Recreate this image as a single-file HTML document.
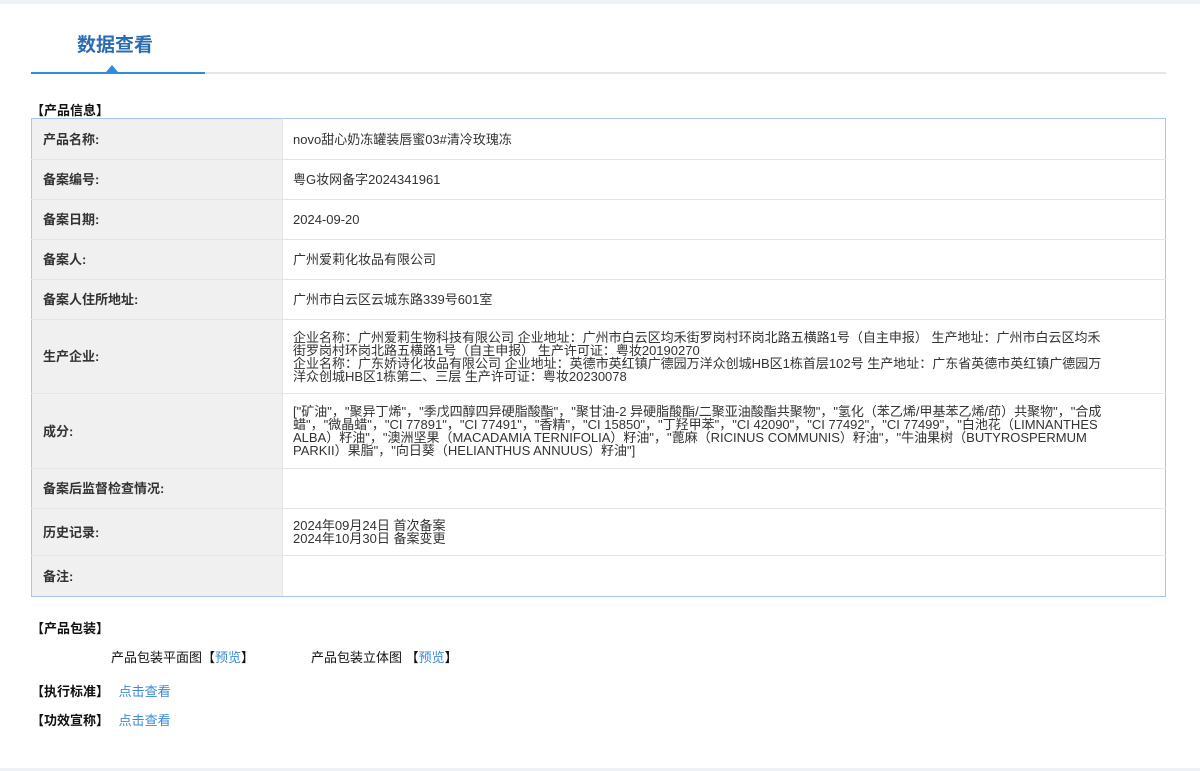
<!DOCTYPE html>
<html><head><meta charset="utf-8"><style>
body{margin:0;width:1200px;height:771px;background:#fff;font-family:"Liberation Sans","Noto Sans CJK SC",sans-serif;font-size:13px;color:#333;position:relative;overflow:hidden}
.top{position:absolute;left:0;top:0;width:1200px;height:4px;background:#eef1f5}
.bot{position:absolute;left:0;top:768px;width:1200px;height:3px;background:#eef1f5}
.title{position:absolute;left:77px;top:30px;font-size:19px;font-weight:bold;color:#2a6cb2}
.gl{position:absolute;left:31px;top:72px;width:1135px;height:2px;background:#e6e6e6}
.bl{position:absolute;left:31px;top:72px;width:174px;height:2px;background:#2f8ae0}
.tri{position:absolute;left:106px;top:65px;width:0;height:0;border-left:6px solid transparent;border-right:6px solid transparent;border-bottom:7px solid #2f8ae0}
.h{position:absolute;font-weight:bold;color:#111}
table{position:absolute;left:31px;top:118px;width:1135px;border-collapse:collapse;border:1px solid #a6c6ee}
td{border-bottom:1px solid #e4e4e4;padding:0 56px 0 10px;vertical-align:middle;line-height:13px;color:#333}
tr:last-child td{border-bottom:1px solid #a6c6ee}
td.l{width:228px;background:#f0f0f0;font-weight:bold;border-right:1px solid #e4e4e4;color:#333;padding:0 11px}
a{color:#3a8ad8;text-decoration:none}
.t{position:absolute;color:#111}
</style></head><body>
<div class="top"></div>
<div class="title">数据查看</div>
<div class="gl"></div><div class="bl"></div><div class="tri"></div>
<div class="h" style="left:31px;top:100px">【产品信息】</div>
<table>
<tr style="height:41px"><td class="l">产品名称:</td><td>novo甜心奶冻罐装唇蜜03#清冷玫瑰冻</td></tr>
<tr style="height:40px"><td class="l">备案编号:</td><td>粤G妆网备字2024341961</td></tr>
<tr style="height:40px"><td class="l">备案日期:</td><td>2024-09-20</td></tr>
<tr style="height:40px"><td class="l">备案人:</td><td>广州爱莉化妆品有限公司</td></tr>
<tr style="height:40px"><td class="l">备案人住所地址:</td><td>广州市白云区云城东路339号601室</td></tr>
<tr style="height:74px"><td class="l">生产企业:</td><td>企业名称：广州爱莉生物科技有限公司 企业地址：广州市白云区均禾街罗岗村环岗北路五横路1号（自主申报） 生产地址：广州市白云区均禾街罗岗村环岗北路五横路1号（自主申报） 生产许可证：粤妆20190270<br>企业名称：广东娇诗化妆品有限公司 企业地址：英德市英红镇广德园万洋众创城HB区1栋首层102号 生产地址：广东省英德市英红镇广德园万洋众创城HB区1栋第二、三层 生产许可证：粤妆20230078</td></tr>
<tr style="height:75px"><td class="l">成分:</td><td>["矿油"，"聚异丁烯"，"季戊四醇四异硬脂酸酯"，"聚甘油-2 异硬脂酸酯/二聚亚油酸酯共聚物"，"氢化（苯乙烯/甲基苯乙烯/茚）共聚物"，"合成蜡"，"微晶蜡"，"CI 77891"，"CI 77491"，"香精"，"CI 15850"，"丁羟甲苯"，"CI 42090"，"CI 77492"，"CI 77499"，"白池花（LIMNANTHES ALBA）籽油"，"澳洲坚果（MACADAMIA TERNIFOLIA）籽油"，"蓖麻（RICINUS COMMUNIS）籽油"，"牛油果树（BUTYROSPERMUM PARKII）果脂"，"向日葵（HELIANTHUS ANNUUS）籽油"]</td></tr>
<tr style="height:40px"><td class="l">备案后监督检查情况:</td><td></td></tr>
<tr style="height:47px"><td class="l">历史记录:</td><td>2024年09月24日 首次备案<br>2024年10月30日 备案变更</td></tr>
<tr style="height:41px"><td class="l">备注:</td><td></td></tr>
</table>
<div class="h" style="left:31px;top:618px">【产品包装】</div>
<div class="t" style="left:111px;top:647px">产品包装平面图【<a>预览</a>】</div>
<div class="t" style="left:311px;top:647px">产品包装立体图 【<a>预览</a>】</div>
<div class="h" style="left:31px;top:681px">【执行标准】 <a style="font-weight:normal;margin-left:6px">点击查看</a></div>
<div class="h" style="left:31px;top:710px">【功效宣称】 <a style="font-weight:normal;margin-left:6px">点击查看</a></div>
<div class="bot"></div>
</body></html>
